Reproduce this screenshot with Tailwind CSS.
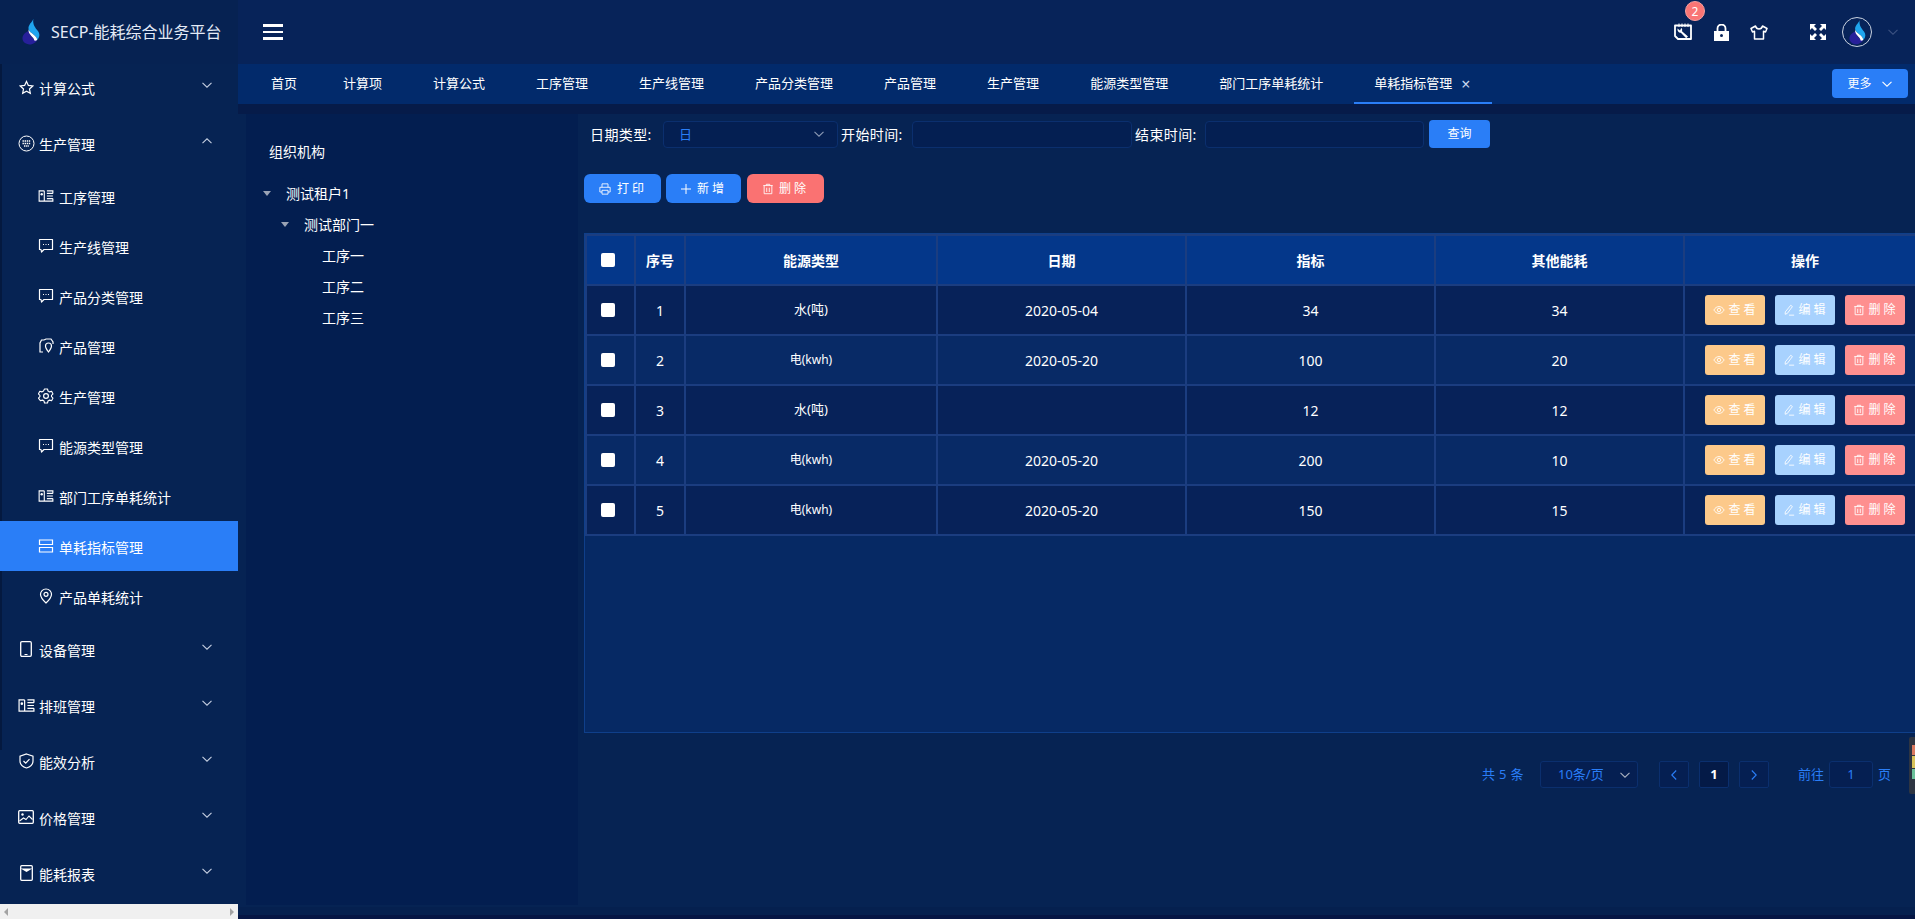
<!DOCTYPE html>
<html lang="zh"><head><meta charset="utf-8"><title>SECP</title>
<script src="https://cdn.jsdelivr.net/npm/@tailwindcss/browser@4"></script></head>
<body class="m-0 bg-[#051544]">
<svg class="absolute w-0 h-0" aria-hidden="true"><defs>
<symbol id="chev" viewBox="0 0 12 12"><path d="M1.500 3.800 6 8.200l4.500-4.400" fill="none" stroke="currentColor" stroke-width="1.100"/></symbol>
<symbol id="card" viewBox="0 0 18 14"><path d="M7 1H1v12h16v-3M7 13V1M10 1h7v3M10 7h7M10 10h7M10 4h7" fill="none" stroke="currentColor" stroke-width="1.300"/><circle cx="4" cy="5" r="1.400" fill="currentColor"/></symbol>
<symbol id="chat" viewBox="0 0 16 16"><path d="M1.500 1.500h13v10H6l-2.500 2.500-.5-2.500H1.500z" fill="none" stroke="currentColor" stroke-width="1.200" stroke-linejoin="round"/><path d="M5 6.500h1M7.500 6.500h1M10 6.500h1" stroke="currentColor" stroke-width="1.200"/></symbol>
<symbol id="eye" viewBox="0 0 14 14"><path d="M1 7c1.500-2.500 3.500-4 6-4s4.500 1.500 6 4c-1.500 2.500-3.500 4-6 4S2.500 9.500 1 7z" fill="none" stroke="currentColor"/><circle cx="7" cy="7" r="2" fill="none" stroke="currentColor"/></symbol>
<symbol id="pen" viewBox="0 0 14 14"><path d="M9 1.500 11 3 5 11l-2.500 1 .2-2.800zM7 13h6" fill="none" stroke="currentColor"/></symbol>
<symbol id="bin" viewBox="0 0 14 14"><path d="M1.500 3h11M5 3V1.500h4V3M2.500 3v9.500h9V3M5.500 5.500v5M8.500 5.500v5" fill="none" stroke="currentColor"/></symbol>
<symbol id="drop" viewBox="0 0 20 28"><path d="M8 13C3 15 .5 19 2 23c1.500 3.500 6 5 10 3.500 3-1.200 5-3 5-5-3 1-7-2-9-8.500z" fill="#27209a"/><path d="M13 0c-1 3.500-6 6.500-5 11 .8 3.500 6 5 8 8.500 1 1.800 1.200 2.500 1 3 3-3 3-6.500.8-9.500-2.500-3.500-5.800-6.500-4.800-13z" fill="#1fa5ee"/><path d="M8 11c.8 3.500 6 5 8 8.500 1 1.800 1.200 2.500 1 3-1 .5-2 .8-3 .5 0-4-7-6-6-12z" fill="#fff"/></symbol>
</defs></svg>

<div class="flex w-[1915px] h-[919px] overflow-hidden relative text-white font-['Noto_Sans','Noto_Sans_CJK_SC',sans-serif]">

<aside class="w-[238px] shrink-0 h-full flex flex-col bg-[#062353] relative">
  <div class="absolute top-0 left-0 w-[2px] h-[750px] bg-[#04193f]"></div>
  <div class="h-16 shrink-0 flex items-center pl-[21px] gap-[11px] bg-[#062252] relative z-10">
    <svg class="w-[19px] h-[28px]"><use href="#drop"/></svg>
    <span class="text-[16px] text-[#e4ebf7]">SECP-能耗综合业务平台</span>
  </div>
  <nav class="flex-1 overflow-hidden -mt-[5px] text-[14px] relative [&>div>span]:mt-[2px]">
    <div class="h-[56px] flex items-center pl-[19px] pr-[25px] gap-[5px]">
      <svg class="w-[15px] h-[15px]" viewBox="0 0 16 16"><path d="m8 1.500 2 4.300 4.700.6-3.500 3.200.9 4.700L8 12l-4.100 2.300.9-4.700L1.300 6.400 6 5.800z" fill="none" stroke="currentColor" stroke-width="1.300"/></svg>
      <span class="flex-1">计算公式</span><svg class="w-3 h-3 text-[#c4cee0] -mt-[4px]"><use href="#chev"/></svg></div>
    <div class="h-[56px] flex items-center pl-[18px] pr-[25px] gap-[4px]">
      <svg class="w-[17px] h-[17px]" viewBox="0 0 17 17"><circle cx="8.500" cy="8.500" r="7.500" fill="none" stroke="currentColor"/><path d="M4.500 6h8M4.500 8.500h8M6 11h5" stroke="currentColor" stroke-width="1.400" stroke-dasharray="1.400 .7"/></svg>
      <span class="flex-1">生产管理</span><svg class="w-3 h-3 text-[#c4cee0] -mt-[4px] rotate-180"><use href="#chev"/></svg></div>
    <div class="h-[50px] flex items-center pl-[38px] gap-[5px]"><svg class="w-4 h-3"><use href="#card"/></svg><span>工序管理</span></div>
    <div class="h-[50px] flex items-center pl-[38px] gap-[5px]"><svg class="w-4 h-4"><use href="#chat"/></svg><span>生产线管理</span></div>
    <div class="h-[50px] flex items-center pl-[38px] gap-[5px]"><svg class="w-4 h-4"><use href="#chat"/></svg><span>产品分类管理</span></div>
    <div class="h-[50px] flex items-center pl-[38px] gap-[5px]"><svg class="w-4 h-4" viewBox="0 0 16 16"><path d="M6 2H3.500L2 5v9h3M6 2l2-1h5l2 3v2" fill="none" stroke="currentColor" stroke-width="1.200"/><path d="M10.500 5C8.500 5 7.500 6.500 7.500 8c0 2 3 6 3 6s3-4 3-6c0-1.500-1-3-3-3z" fill="none" stroke="currentColor" stroke-width="1.200"/></svg><span>产品管理</span></div>
    <div class="h-[50px] flex items-center pl-[38px] gap-[5px]"><svg class="w-4 h-4" viewBox="0 0 16 16"><path d="M6.500 1h3l.5 2 1.600.9 2-.6 1.400 2.600-1.500 1.400v1.400l1.500 1.400-1.400 2.600-2-.6-1.600.9-.5 2h-3l-.5-2-1.600-.9-2 .6L.4 10.100l1.500-1.400V7.300L.4 5.900l1.400-2.600 2 .6L5.500 3z" fill="none" stroke="currentColor" stroke-width="1.100" stroke-linejoin="round"/><circle cx="8" cy="8" r="2.400" fill="none" stroke="currentColor" stroke-width="1.200"/></svg><span>生产管理</span></div>
    <div class="h-[50px] flex items-center pl-[38px] gap-[5px]"><svg class="w-4 h-4"><use href="#chat"/></svg><span>能源类型管理</span></div>
    <div class="h-[50px] flex items-center pl-[38px] gap-[5px]"><svg class="w-4 h-3"><use href="#card"/></svg><span>部门工序单耗统计</span></div>
    <div class="h-[50px] flex items-center pl-[38px] gap-[5px] bg-[#2a7ef7]"><svg class="w-4 h-4" viewBox="0 0 16 16"><path d="M1.500 2h13v4.500h-13zM1.500 9.500h13V14h-13z" fill="none" stroke="currentColor" stroke-width="1.200"/></svg><span>单耗指标管理</span></div>
    <div class="h-[50px] flex items-center pl-[38px] gap-[5px]"><svg class="w-4 h-4" viewBox="0 0 16 16"><path d="M8 1C4.800 1 2.500 3.400 2.500 6.300 2.500 10 8 15 8 15s5.500-5 5.500-8.700C13.500 3.400 11.200 1 8 1z" fill="none" stroke="currentColor" stroke-width="1.200"/><circle cx="8" cy="6.300" r="2" fill="none" stroke="currentColor" stroke-width="1.200"/></svg><span>产品单耗统计</span></div>
    <div class="h-[56px] flex items-center pl-[20px] pr-[25px] gap-[7px]"><svg class="w-3 h-4" viewBox="0 0 12 16"><rect x=".7" y=".7" width="10.600" height="14.600" rx="1.200" fill="none" stroke="currentColor" stroke-width="1.300"/><path d="M4.500 13.500h3" stroke="currentColor"/></svg><span class="flex-1">设备管理</span><svg class="w-3 h-3 text-[#c4cee0] -mt-[4px]"><use href="#chev"/></svg></div>
    <div class="h-[56px] flex items-center pl-[18px] pr-[25px] gap-[4px]"><svg class="w-[17px] h-[13px]"><use href="#card"/></svg><span class="flex-1">排班管理</span><svg class="w-3 h-3 text-[#c4cee0] -mt-[4px]"><use href="#chev"/></svg></div>
    <div class="h-[56px] flex items-center pl-[19px] pr-[25px] gap-[5px]"><svg class="w-[15px] h-4" viewBox="0 0 15 16"><path d="M7.500 1 14 3.200V8c0 3.500-3 6-6.500 7C4 14 1 11.500 1 8V3.200z" fill="none" stroke="currentColor" stroke-width="1.200"/><path d="m4.500 8 2.200 2.200 3.800-4" fill="none" stroke="currentColor" stroke-width="1.200"/></svg><span class="flex-1">能效分析</span><svg class="w-3 h-3 text-[#c4cee0] -mt-[4px]"><use href="#chev"/></svg></div>
    <div class="h-[56px] flex items-center pl-[18px] pr-[25px] gap-[4px]"><svg class="w-4 h-[14px]" viewBox="0 0 16 14"><rect x=".7" y=".7" width="14.600" height="12.600" rx="1" fill="none" stroke="currentColor" stroke-width="1.300"/><circle cx="4.500" cy="4.500" r="1.200" fill="currentColor"/><path d="m1.500 11 4-3 2.500 1.500 3-3.500 3.500 3.500" fill="none" stroke="currentColor" stroke-width="1.100"/></svg><span class="flex-1 ml-[1px]">价格管理</span><svg class="w-3 h-3 text-[#c4cee0] -mt-[4px]"><use href="#chev"/></svg></div>
    <div class="h-[56px] flex items-center pl-[20px] pr-[25px] gap-[6px]"><svg class="w-[13px] h-4" viewBox="0 0 13 16"><rect x=".7" y=".7" width="11.600" height="14.600" rx="1" fill="none" stroke="currentColor" stroke-width="1.300"/><path d="M.7 3.500h11.600L6.500 7z" fill="currentColor"/></svg><span class="flex-1">能耗报表</span><svg class="w-3 h-3 text-[#c4cee0] -mt-[4px]"><use href="#chev"/></svg></div>
  </nav>
  <div class="h-[15px] shrink-0 bg-[#f0f0f0] flex items-center justify-between px-[4px] relative z-10">
    <span class="w-0 h-0 border-y-[4px] border-y-transparent border-r-[4px] border-r-[#a3a3a3]"></span>
    <span class="w-0 h-0 border-y-[4px] border-y-transparent border-l-[4px] border-l-[#a3a3a3]"></span>
  </div>
</aside>

<main class="flex-1 min-w-0 h-full flex flex-col relative">
  <header class="h-16 shrink-0 bg-[#072359] flex items-center pl-[25px] relative">
    <div class="w-[20px] flex flex-col gap-[4px]"><span class="h-[2.500px] bg-white"></span><span class="h-[2.500px] bg-white"></span><span class="h-[2.500px] bg-white"></span></div>
    <div class="ml-auto flex items-center pr-[16px]">
      <span class="relative w-[19px] h-[18px] mr-[21px]">
        <svg class="w-[19px] h-[18px]" viewBox="0 0 19 18"><path d="M1 2.500h16V16H4l-3-3z" fill="none" stroke="#fff" stroke-width="1.800" stroke-linejoin="round"/><path d="M5 .5v3.500M8 .5v3.500M11 .5v3.500M14 .5v3.500" stroke="#fff"/><path d="M3.500 5.500 6 7.500l1.200-2.500c1 .5 1.200 1.800.8 3.200l6 5.300-1.800 1.800-5.400-5.600C5 10 3 8 3.500 5.500z" fill="#fff"/></svg>
        <span class="absolute -top-[22px] left-[11px] w-5 h-5 rounded-full bg-[#f97575] text-[12px] leading-5 text-center border border-[#f5a0a0]">2</span>
      </span>
      <svg class="w-[15px] h-[17px] mr-[21px]" viewBox="0 0 15 17"><path d="M3.500 7V4.500a4 4 0 0 1 8 0V7" fill="none" stroke="#fff" stroke-width="1.800"/><path d="M0 7h15v10H0z" fill="#fff"/><circle cx="7.500" cy="11.500" r="1.500" fill="#072359"/></svg>
      <svg class="w-[18px] h-[15px] mr-[42px]" viewBox="0 0 18 15"><path d="M5.500 1 1 3.500l1.500 3.500 2-.8V14h9V6.200l2 .8L17 3.500 12.500 1C12 3 10.500 4 9 4S6 3 5.500 1z" fill="none" stroke="#fff" stroke-width="1.500" stroke-linejoin="round"/></svg>
      <svg class="w-4 h-4 mr-[16px]" viewBox="0 0 16 16"><path d="M0 0h6L4 2l3 3-2 2-3-3-2 2zM16 0v6l-2-2-3 3-2-2 3-3-2-2zM0 16v-6l2 2 3-3 2 2-3 3 2 2zM16 16h-6l2-2-3-3 2-2 3 3 2-2z" fill="#fff"/></svg>
      <span class="w-[30px] h-[30px] rounded-full border border-[#c9d2e0] flex items-center justify-center mr-[15px]"><svg class="w-[18px] h-[25px]"><use href="#drop"/></svg></span>
      <svg class="w-3 h-3 text-[#3b5180]"><use href="#chev"/></svg>
    </div>
  </header>

  <div class="h-10 shrink-0 bg-[#022a6b] flex items-center text-[13px] pl-[33px] relative">
    <span>首页</span>
    <span class="ml-[46px]">计算项</span>
    <span class="ml-[51px]">计算公式</span>
    <span class="ml-[51px]">工序管理</span>
    <span class="ml-[51px]">生产线管理</span>
    <span class="ml-[51px]">产品分类管理</span>
    <span class="ml-[51px]">产品管理</span>
    <span class="ml-[51px]">生产管理</span>
    <span class="ml-[51px]">能源类型管理</span>
    <span class="ml-[51px]">部门工序单耗统计</span>
    <span class="ml-[51px] relative flex items-center h-full">单耗指标管理<span class="ml-[9px] text-[16px] text-[#c8d6ee] leading-none">×</span>
      <span class="absolute bottom-0 -left-[20px] -right-[22px] h-[2px] bg-[#2a7ef7]"></span></span>
    <span class="absolute right-[7px] top-[5px] w-[76px] h-[29px] rounded-[4px] bg-[#2a7ef7] flex items-center justify-center gap-[9px] text-[12px]">更多<svg class="w-3 h-3"><use href="#chev"/></svg></span>
  </div>
  <div class="h-[10px] shrink-0 bg-[#061b49]"></div>

  <div class="flex-1 min-h-0 flex pl-[8px] bg-[#062353]">
    <section class="w-[332px] shrink-0 bg-[#031e50] text-[14px] mb-[2px]">
      <div class="pl-[23px] pt-[28px] leading-5">组织机构</div>
      <div class="mt-[16px] flex flex-col">
        <div class="h-[31px] flex items-center pl-[17px] gap-[15px]"><span class="w-0 h-0 border-x-[4px] border-x-transparent border-t-[5px] border-t-[#9aa3b5]"></span>测试租户1</div>
        <div class="h-[31px] flex items-center pl-[35px] gap-[15px]"><span class="w-0 h-0 border-x-[4px] border-x-transparent border-t-[5px] border-t-[#9aa3b5]"></span>测试部门一</div>
        <div class="h-[31px] flex items-center pl-[76px]">工序一</div>
        <div class="h-[31px] flex items-center pl-[76px]">工序二</div>
        <div class="h-[31px] flex items-center pl-[76px]">工序三</div>
      </div>
    </section>

    <section class="flex-1 min-w-0 ml-[6px] pt-[6px] overflow-hidden relative">
      <div class="h-[28px] flex items-center text-[14px] tracking-[0.4px]">
        <span class="ml-[6px] w-[73px]">日期类型:</span>
        <span class="w-[175px] h-[27px] rounded-[4px] bg-[#041f52] border border-[#0b2f6e] flex items-center justify-between pl-[15px] pr-[12px] text-[13px] text-[#2a7ef7]"><span class="mt-[2px]">日</span><svg class="w-3 h-3 text-[#8c9ab5]"><use href="#chev"/></svg></span>
        <span class="ml-[3px] w-[71px]">开始时间:</span>
        <span class="w-[220px] h-[27px] rounded-[4px] bg-[#041f52] border border-[#0b2f6e]"></span>
        <span class="ml-[3px] w-[70px]">结束时间:</span>
        <span class="w-[219px] h-[27px] rounded-[4px] bg-[#041f52] border border-[#0b2f6e]"></span>
        <span class="ml-[5px] w-[61px] h-[28px] rounded-[4px] bg-[#2a7ef7] flex items-center justify-center text-[12px] tracking-normal">查询</span>
      </div>
      <div class="mt-[26px] h-[29px] flex gap-[5px] text-[12px] tracking-[3px]">
        <span class="w-[77px] rounded-[6px] bg-[#2a7ef7] flex items-center justify-center gap-[6px] pl-[1px]"><svg class="w-3 h-3" viewBox="0 0 14 14"><path d="M3.500 5V1h7v4M3.500 10.500H1V5h12v5.500h-2.500M3.500 8.500h7V13h-7z" fill="none" stroke="currentColor"/></svg>打印</span>
        <span class="w-[75px] rounded-[6px] bg-[#2a7ef7] flex items-center justify-center gap-[5px]"><svg class="w-3 h-3" viewBox="0 0 12 12"><path d="M6 1v10M1 6h10" stroke="currentColor"/></svg>新增</span>
        <span class="ml-[1px] w-[77px] rounded-[6px] bg-[#fa7272] flex items-center justify-center gap-[5px]"><svg class="w-3 h-3"><use href="#bin"/></svg>删除</span>
      </div>
      <div class="mt-[30px] h-[500px] w-[1340px] bg-[#062964] border border-[#0f3f8a]">
        <table class="table-fixed w-[1340px] border-collapse text-[14px] text-center [&_td]:border-2 [&_td]:border-[#1b3d80] [&_th]:border-2 [&_th]:border-[#1b3d80]">
          <colgroup><col class="w-[49px]"><col class="w-[50px]"><col class="w-[252px]"><col class="w-[249px]"><col class="w-[249px]"><col class="w-[249px]"><col class="w-[242px]"></colgroup>
          <thead><tr class="h-[50px] bg-[#04378a] text-[14px]">
            <th><span class="block ml-[14px] w-[14px] h-[14px] rounded-[2px] bg-white"></span></th><th>序号</th><th>能源类型</th><th>日期</th><th>指标</th><th>其他能耗</th><th>操作</th></tr></thead>
          <tbody class="[&>tr]:h-[50px] [&>tr:nth-child(odd)]:bg-[#072259] [&>tr:nth-child(even)]:bg-[#082a66]">
            <tr><td><span class="block ml-[14px] w-[14px] h-[14px] rounded-[2px] bg-white"></span></td><td>1</td><td class="text-[13px]">水(吨)</td><td>2020-05-04</td><td>34</td><td>34</td><td><div class="flex justify-center gap-[10px] text-[12px] tracking-[3px]"><span class="w-[60px] h-[30px] rounded-[3px] bg-[#fcc98a] flex items-center justify-center gap-[3px] pl-[2px]"><svg class="w-3 h-3"><use href="#eye"/></svg>查看</span><span class="w-[60px] h-[30px] rounded-[3px] bg-[#a8d2fe] flex items-center justify-center gap-[3px] pl-[2px]"><svg class="w-3 h-3"><use href="#pen"/></svg>编辑</span><span class="w-[60px] h-[30px] rounded-[3px] bg-[#fe8f8f] flex items-center justify-center gap-[3px] pl-[2px]"><svg class="w-3 h-3"><use href="#bin"/></svg>删除</span></div></td></tr>
            <tr><td><span class="block ml-[14px] w-[14px] h-[14px] rounded-[2px] bg-white"></span></td><td>2</td><td class="text-[12px]">电(kwh)</td><td>2020-05-20</td><td>100</td><td>20</td><td><div class="flex justify-center gap-[10px] text-[12px] tracking-[3px]"><span class="w-[60px] h-[30px] rounded-[3px] bg-[#fcc98a] flex items-center justify-center gap-[3px] pl-[2px]"><svg class="w-3 h-3"><use href="#eye"/></svg>查看</span><span class="w-[60px] h-[30px] rounded-[3px] bg-[#a8d2fe] flex items-center justify-center gap-[3px] pl-[2px]"><svg class="w-3 h-3"><use href="#pen"/></svg>编辑</span><span class="w-[60px] h-[30px] rounded-[3px] bg-[#fe8f8f] flex items-center justify-center gap-[3px] pl-[2px]"><svg class="w-3 h-3"><use href="#bin"/></svg>删除</span></div></td></tr>
            <tr><td><span class="block ml-[14px] w-[14px] h-[14px] rounded-[2px] bg-white"></span></td><td>3</td><td class="text-[13px]">水(吨)</td><td></td><td>12</td><td>12</td><td><div class="flex justify-center gap-[10px] text-[12px] tracking-[3px]"><span class="w-[60px] h-[30px] rounded-[3px] bg-[#fcc98a] flex items-center justify-center gap-[3px] pl-[2px]"><svg class="w-3 h-3"><use href="#eye"/></svg>查看</span><span class="w-[60px] h-[30px] rounded-[3px] bg-[#a8d2fe] flex items-center justify-center gap-[3px] pl-[2px]"><svg class="w-3 h-3"><use href="#pen"/></svg>编辑</span><span class="w-[60px] h-[30px] rounded-[3px] bg-[#fe8f8f] flex items-center justify-center gap-[3px] pl-[2px]"><svg class="w-3 h-3"><use href="#bin"/></svg>删除</span></div></td></tr>
            <tr><td><span class="block ml-[14px] w-[14px] h-[14px] rounded-[2px] bg-white"></span></td><td>4</td><td class="text-[12px]">电(kwh)</td><td>2020-05-20</td><td>200</td><td>10</td><td><div class="flex justify-center gap-[10px] text-[12px] tracking-[3px]"><span class="w-[60px] h-[30px] rounded-[3px] bg-[#fcc98a] flex items-center justify-center gap-[3px] pl-[2px]"><svg class="w-3 h-3"><use href="#eye"/></svg>查看</span><span class="w-[60px] h-[30px] rounded-[3px] bg-[#a8d2fe] flex items-center justify-center gap-[3px] pl-[2px]"><svg class="w-3 h-3"><use href="#pen"/></svg>编辑</span><span class="w-[60px] h-[30px] rounded-[3px] bg-[#fe8f8f] flex items-center justify-center gap-[3px] pl-[2px]"><svg class="w-3 h-3"><use href="#bin"/></svg>删除</span></div></td></tr>
            <tr><td><span class="block ml-[14px] w-[14px] h-[14px] rounded-[2px] bg-white"></span></td><td>5</td><td class="text-[12px]">电(kwh)</td><td>2020-05-20</td><td>150</td><td>15</td><td><div class="flex justify-center gap-[10px] text-[12px] tracking-[3px]"><span class="w-[60px] h-[30px] rounded-[3px] bg-[#fcc98a] flex items-center justify-center gap-[3px] pl-[2px]"><svg class="w-3 h-3"><use href="#eye"/></svg>查看</span><span class="w-[60px] h-[30px] rounded-[3px] bg-[#a8d2fe] flex items-center justify-center gap-[3px] pl-[2px]"><svg class="w-3 h-3"><use href="#pen"/></svg>编辑</span><span class="w-[60px] h-[30px] rounded-[3px] bg-[#fe8f8f] flex items-center justify-center gap-[3px] pl-[2px]"><svg class="w-3 h-3"><use href="#bin"/></svg>删除</span></div></td></tr>
          </tbody>
        </table>
      </div>
      <div class="mt-[28px] h-[27px] flex items-center text-[13px] text-[#2a7ef7] pl-[898px]">
        <span class="w-[58px] tracking-[0.3px]">共 5 条</span>
        <span class="w-[98px] h-[27px] rounded-[3px] bg-[#051f52] border border-[#0b2f6e] flex items-center justify-between pl-[17px] pr-[6px]">10条/页<svg class="w-3 h-3 text-[#aab2c0]"><use href="#chev"/></svg></span>
        <span class="ml-[21px] w-[30px] h-[27px] rounded-[2px] bg-[#051f52] border border-[#0b2f6e] flex items-center justify-center"><svg class="w-3 h-3 rotate-90"><use href="#chev"/></svg></span>
        <span class="ml-[10px] w-[30px] h-[27px] rounded-[2px] bg-[#041a47] border border-[#0b2f6e] flex items-center justify-center text-white font-bold">1</span>
        <span class="ml-[10px] w-[30px] h-[27px] rounded-[2px] bg-[#051f52] border border-[#0b2f6e] flex items-center justify-center"><svg class="w-3 h-3 -rotate-90"><use href="#chev"/></svg></span>
        <span class="ml-[29px]">前往</span>
        <span class="ml-[5px] w-[44px] h-[27px] rounded-[3px] bg-[#051f52] border border-[#0b2f6e] flex items-center justify-center">1</span>
        <span class="ml-[5px]">页</span>
      </div>
    </section>
  </div>
  <div class="h-[8px] shrink-0 bg-[#05204f]"></div>
  <div class="h-[4px] shrink-0 bg-[#051544]"></div>
  <div class="absolute right-0 top-[737px] w-[6px] h-[57px] rounded-l-[2px] bg-[#2e3542] flex flex-col gap-[1px] pt-[8px] pl-[3px]">
    <span class="h-[10px] bg-[#d9785f]"></span><span class="h-[12px] bg-[#d8c35a]"></span><span class="h-[10px] bg-[#6bc09a]"></span>
  </div>
</main>
</div>
</body></html>
